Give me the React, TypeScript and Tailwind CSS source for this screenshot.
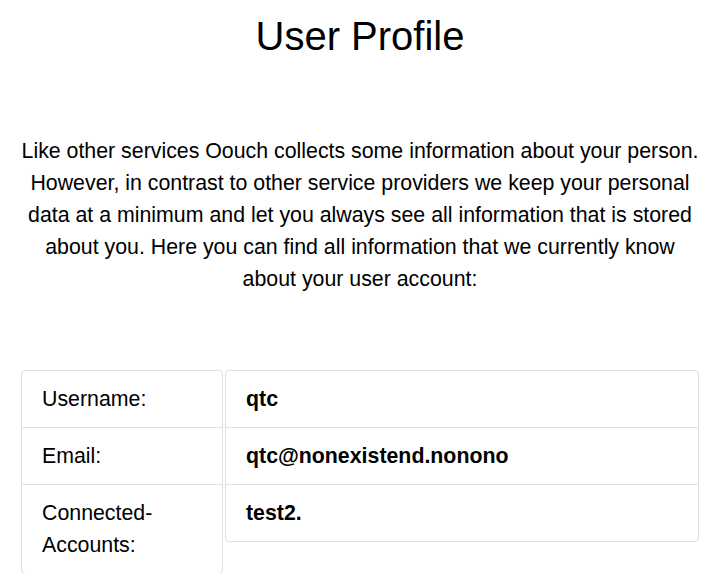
const rows: { label: string; value: string }[] = [
  { label: 'Username:', value: 'qtc' },
  { label: 'Email:', value: 'qtc@nonexistend.nonono' },
  { label: 'Connected-Accounts:', value: 'test2.' },
];

export default function App() {
  return (
    <div className="min-h-screen bg-white text-black pl-[21px] pr-[26px] font-['Liberation_Sans',Arial,sans-serif]">
      <h1 className="pt-[12px] text-center text-[40px] leading-[48px] font-normal">User Profile</h1>

      <p className="mt-[75px] text-center text-[21.33px] leading-[32px]">
        Like other services Oouch collects some information about your person. However, in contrast to other
        service providers we keep your personal data at a minimum and let you always see all information that is
        stored about you. Here you can find all information that we currently know about your user account:
      </p>

      <div className="mt-[75px] flex items-start gap-[2px] text-[21.33px] leading-[32px]">
        {/* labels */}
        <ul className="w-[202px] shrink-0 rounded-[4px] border border-black/[0.125]">
          {rows.map((r, i) => (
            <li key={r.label} className={i > 0 ? 'border-t border-black/[0.125] px-5 py-3' : 'px-5 py-3'}>
              {r.label === 'Connected-Accounts:' ? (
                <>
                  Connected-
                  <br />
                  Accounts:
                </>
              ) : (
                r.label
              )}
            </li>
          ))}
        </ul>

        {/* values */}
        <ul className="flex-1 rounded-[4px] border border-black/[0.125]">
          {rows.map((r, i) => (
            <li
              key={r.value}
              className={i > 0 ? 'border-t border-black/[0.125] px-5 py-3 font-bold' : 'px-5 py-3 font-bold'}
            >
              {r.value}
            </li>
          ))}
        </ul>
      </div>
    </div>
  );
}
